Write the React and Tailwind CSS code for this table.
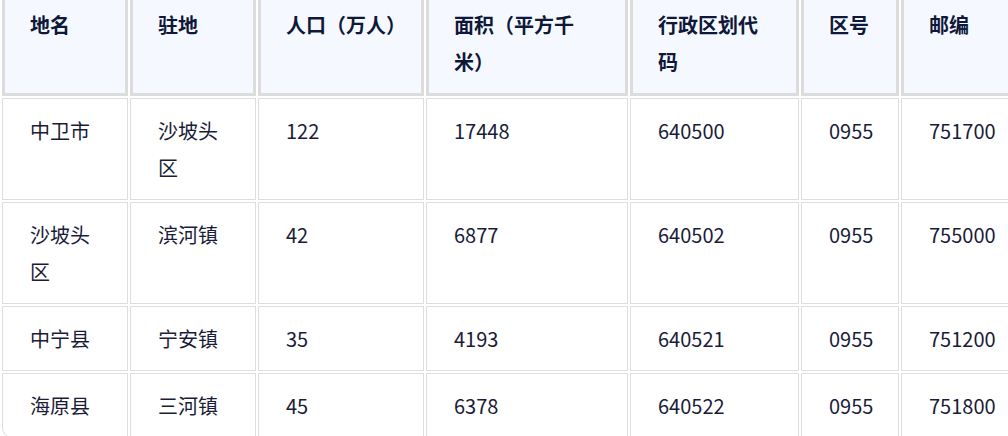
import React from "react";

const headers = [
  ["地名"],
  ["驻地"],
  ["人口（万人）"],
  ["面积（平方千", "米）"],
  ["行政区划代", "码"],
  ["区号"],
  ["邮编"],
];

const widths = ["w-[126px]", "w-[126px]", "w-[166px]", "w-[202px]", "w-[169px]", "w-[98px]", "w-[140px]"];

const rows = [
  [["中卫市"], ["沙坡头", "区"], ["122"], ["17448"], ["640500"], ["0955"], ["751700"]],
  [["沙坡头", "区"], ["滨河镇"], ["42"], ["6877"], ["640502"], ["0955"], ["755000"]],
  [["中宁县"], ["宁安镇"], ["35"], ["4193"], ["640521"], ["0955"], ["751200"]],
  [["海原县"], ["三河镇"], ["45"], ["6378"], ["640522"], ["0955"], ["751800"]],
];

function Lines({ lines }) {
  return lines.map((l, i) => (
    <React.Fragment key={i}>
      {i > 0 && <br />}
      {l}
    </React.Fragment>
  ));
}

export default function App() {
  return (
    <div
      className="w-[1008px] h-[436px] overflow-hidden bg-white"
      style={{ fontFamily: '"Noto Sans CJK SC", "Noto Sans", sans-serif' }}
    >
      <table className="table-fixed w-[1043px] border-separate border-spacing-[2px] mt-[-12px] text-[20px] leading-[37px]">
        <thead>
          <tr>
            {headers.map((h, i) => (
              <th
                key={i}
                className={`${widths[i]} bg-[#f5f9ff] border-[3px] border-[#dcdcdc] px-[25px] py-[13px] text-left align-top font-semibold text-[#0f1838] whitespace-nowrap`}
              >
                <Lines lines={h} />
              </th>
            ))}
          </tr>
        </thead>
        <tbody>
          {rows.map((r, ri) => (
            <tr key={ri}>
              {r.map((c, ci) => (
                <td
                  key={ci}
                  className={`border border-[#dedede] px-[27px] py-[13px] align-top text-[#1a1c38] whitespace-nowrap ${
                    ri === rows.length - 1 && ci === 0 ? "rounded-bl-[10px]" : ""
                  }`}
                >
                  <Lines lines={c} />
                </td>
              ))}
            </tr>
          ))}
        </tbody>
      </table>
    </div>
  );
}
